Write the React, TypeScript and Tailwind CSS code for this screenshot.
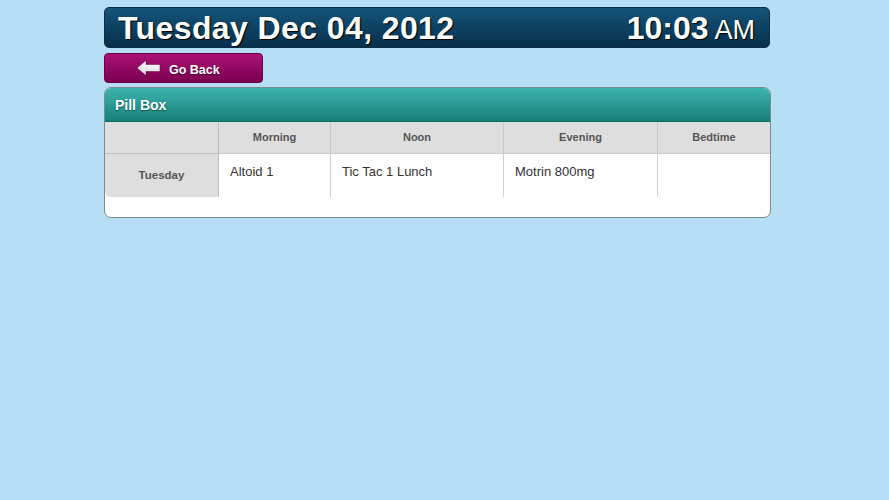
const font = { fontFamily: '"Liberation Sans", Arial, sans-serif' }

const slots = ['Morning', 'Noon', 'Evening', 'Bedtime']
const pills = ['Altoid 1', 'Tic Tac 1 Lunch', 'Motrin 800mg', '']

function BackArrow() {
  return (
    <svg width="24" height="16" viewBox="0 0 24 16">
      <defs>
        <linearGradient id="arr" x1="0" y1="0" x2="0" y2="1">
          <stop offset="0" stopColor="#ffffff" />
          <stop offset="1" stopColor="#d8d8d8" />
        </linearGradient>
      </defs>
      <path d="M0 8 L9 0.5 L9 4.5 L23 4.5 L23 11.5 L9 11.5 L9 15.5 Z" fill="url(#arr)" stroke="#6a0044" strokeWidth="0.5" />
    </svg>
  )
}

export default function App() {
  return (
    <div className="min-h-[500px] w-full bg-[#b6dff5]" style={font}>
      <div className="w-[667px] ml-[104px] pt-[7px]">
        {/* Date header */}
        <div className="w-[666px] h-[41px] rounded-[5px] border border-[#0a2e48] bg-gradient-to-b from-[#14557a] to-[#082f4c] flex items-center justify-between pl-[13px] pr-[14px] text-white [text-shadow:1px_1px_1px_#000]">
          <div className="text-[32px] font-bold leading-none tracking-[0.4px]">Tuesday Dec 04, 2012</div>
          <div className="leading-none">
            <span className="text-[32px] font-bold">10:03</span>
            <span className="text-[27px] ml-[6px]">AM</span>
          </div>
        </div>

        {/* Go back */}
        <button className="mt-[5px] w-[159px] h-[30px] rounded-[4px] border border-[#6b0045] bg-gradient-to-b from-[#ad1276] to-[#7a0150] flex items-center pl-[32px] text-white text-[12.5px] font-bold [text-shadow:0_1px_1px_#4a0030]">
          <BackArrow />
          <span className="ml-[8px] mt-[4px]">Go Back</span>
        </button>

        {/* Pill box panel */}
        <div className="mt-[4px] rounded-[7px] border border-[#7c8a94] bg-white overflow-hidden h-[131px]">
          <div className="h-[34px] bg-gradient-to-b from-[#3cb4ad] to-[#16807a] border-b border-[#0f6b66] flex items-center pl-[10px] pt-[1px] text-white text-[14px] font-bold [text-shadow:0_1px_1px_#0b4f4b]">
            Pill Box
          </div>
          <div className="grid grid-cols-[114px_112px_173px_154px_1fr] text-[11px]">
            <div className="h-[32px] bg-[#dedede] border-r border-b border-[#bdbdbd]" />
            {slots.map((s, i) => (
              <div
                key={s}
                className={
                  'h-[32px] bg-[#dedede] border-b border-[#c9c9c9] flex items-center justify-center font-bold text-[#555]' +
                  (i < 3 ? ' border-r' : '')
                }
              >
                {s}
              </div>
            ))}
            <div className="h-[43px] bg-[#dedede] border-r border-[#bdbdbd] rounded-bl-[6px] flex items-center justify-center font-bold text-[11.5px] text-[#555]">
              Tuesday
            </div>
            {pills.map((p, i) => (
              <div
                key={i}
                className={
                  'h-[43px] pl-[11px] pt-[8px] text-[13px] text-[#333]' + (i < 3 ? ' border-r border-[#d0d0d0]' : '')
                }
              >
                {p}
              </div>
            ))}
          </div>
        </div>
      </div>
    </div>
  )
}
